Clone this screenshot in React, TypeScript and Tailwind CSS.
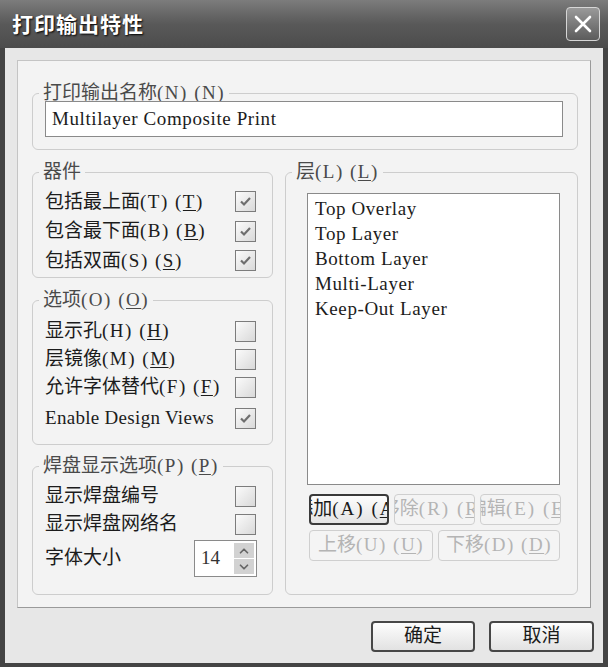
import { ChevronDown, ChevronUp } from 'lucide-react';

const font = "font-['Liberation_Serif','Noto_Sans_CJK_SC',serif]";

// label with mnemonic: 文本(K) (K) — second one underlined
const Mn = ({ t, k, wide }: { t: string; k: string; wide?: boolean }) => (
  <>
    {t}
    <span className={wide ? 'tracking-[2px]' : 'tracking-[1.5px]'}>
      ({k}) (<span className="underline underline-offset-2">{k}</span>)
    </span>
  </>
);

const Check = ({ on }: { on?: boolean }) => (
  <div className="w-[21px] h-[21px] border border-[#7c7c7c] bg-gradient-to-br from-[#fbfbfb] to-[#d9d9d9] flex items-center justify-center shrink-0">
    {on && (
      <svg width="15" height="15" viewBox="0 0 15 15">
        <path d="M3 7.5 L6 10.5 L12 4" fill="none" stroke="#6e6e6e" strokeWidth="2.2" />
      </svg>
    )}
  </div>
);

const Row = ({ children, on, h = 'h-[29px]' }: { children: React.ReactNode; on?: boolean; h?: string }) => (
  <div className={`flex items-center justify-between pl-[12px] pr-[16px] ${h}`}>
    <span className="text-[19px] text-[#1c1c1c] whitespace-nowrap">{children}</span>
    <Check on={on} />
  </div>
);

const Group = ({ title, className, children }: { title: React.ReactNode; className: string; children: React.ReactNode }) => (
  <fieldset className={`border border-[#cdcdcd] rounded-[6px] flex flex-col ${className}`}>
    <legend className="ml-[6px] px-[4px] text-[19px] leading-[20px] text-[#4a4a4a] whitespace-nowrap">{title}</legend>
    {children}
  </fieldset>
);

const SmallBtn = ({ children, w, active }: { children: React.ReactNode; w: string; active?: boolean }) => (
  <div
    className={`${w} h-full rounded-[4px] overflow-hidden flex items-center justify-center whitespace-nowrap text-[19px] ${
      active
        ? 'border-2 border-[#3a3a3a] bg-gradient-to-b from-[#fdfdfd] to-[#e4e4e4] text-[#1a1a1a]'
        : 'border border-[#cfcfcf] bg-[#f4f4f4] text-[#b4b4b4]'
    }`}
  >
    {children}
  </div>
);

const App = () => {
  return (
    <div className={`w-[608px] h-[667px] bg-[#444] flex flex-col ${font}`}>
      {/* Title bar */}
      <div className="h-[48px] shrink-0 bg-gradient-to-b from-[#7c7c7c] via-[#595959] to-[#4c4c4c] flex items-center justify-between pl-[12px] pr-[8px]">
        <span className="text-white font-bold text-[21px] tracking-[1px] font-['Noto_Sans_CJK_SC',sans-serif] [text-shadow:1px_1px_2px_#000]">
          打印输出特性
        </span>
        <div className="w-[34px] h-[34px] rounded-[4px] border border-[#d6d6d6] bg-gradient-to-b from-[#9a9a9a] to-[#5c5c5c] flex items-center justify-center">
          <svg width="20" height="20" viewBox="0 0 20 20">
            <path d="M3 3 L17 17 M17 3 L3 17" stroke="#fff" strokeWidth="2.6" strokeLinecap="round" />
          </svg>
        </div>
      </div>

      {/* Client area */}
      <div className="flex-1 mx-[5px] mb-[4px] bg-[#e7e7e7] flex flex-col">
        <div className="mt-[12px] mx-[12px] h-[548px] border border-t-[#c4c4c4] border-l-[#c4c4c4] border-r-[#9a9a9a] border-b-[#9a9a9a] bg-[#f3f3f3] pt-[22px] pl-[14px] pr-[12px] flex flex-col">
          {/* Output name */}
          <Group title={<Mn t="打印输出名称" k="N" />} className="h-[67px]">
            <div className="-mt-[2px] ml-[12px] mr-[14px] h-[36px] bg-white border border-[#8a8a8a] flex items-center px-[6px] text-[19px] tracking-[0.6px] text-[#1c1c1c]">
              Multilayer Composite Print
            </div>
          </Group>

          <div className="mt-[12px] flex gap-[12px]">
            {/* Left column */}
            <div className="w-[241px] flex flex-col">
              <Group title="器件" className="h-[116px]">
                <div className="mt-[5px]">
                  <Row on h="h-[29.5px]"><Mn t="包括最上面" k="T" /></Row>
                  <Row on h="h-[29.5px]"><Mn t="包含最下面" k="B" /></Row>
                  <Row on h="h-[29.5px]"><Mn t="包括双面" k="S" /></Row>
                </div>
              </Group>

              <Group title={<Mn t="选项" k="O" />} className="h-[155px] mt-[12px]">
                <div className="mt-[7px]">
                  <Row h="h-[28px]"><Mn t="显示孔" k="H" /></Row>
                  <Row h="h-[28px]"><Mn t="层镜像" k="M" /></Row>
                  <Row h="h-[28px]"><Mn t="允许字体替代" k="F" /></Row>
                  <div className="mt-[3px]">
                    <Row on h="h-[28px]"><span className="tracking-[0.3px]">Enable Design Views</span></Row>
                  </div>
                </div>
              </Group>

              <Group title={<Mn t="焊盘显示选项" k="P" />} className="h-[139px] mt-[11px]">
                <div className="mt-[6px]">
                  <Row h="h-[28px]">显示焊盘编号</Row>
                  <Row h="h-[28px]">显示焊盘网络名</Row>
                  <div className="mt-[2px] h-[37px] flex items-center justify-between pl-[12px] pr-[15px]">
                    <span className="text-[19px] text-[#1c1c1c]">字体大小</span>
                    <div className="w-[63px] h-[37px] bg-white border border-[#8a8a8a] flex items-center justify-between pl-[6px] pr-[2px]">
                      <span className="text-[19px] text-[#333]">14</span>
                      <div className="flex flex-col gap-[1px]">
                        <div className="w-[20px] h-[15px] bg-[#d2d2d2] flex items-center justify-center">
                          <ChevronUp size={14} strokeWidth={3} color="#666" />
                        </div>
                        <div className="w-[20px] h-[15px] bg-[#d2d2d2] flex items-center justify-center">
                          <ChevronDown size={14} strokeWidth={3} color="#666" />
                        </div>
                      </div>
                    </div>
                  </div>
                </div>
              </Group>
            </div>

            {/* Right column: layers */}
            <Group title={<Mn t="层" k="L" />} className="w-[293px] h-[433px]">
              <div className="mt-[11px] ml-[21px] mr-[17px] h-[292px] bg-white border border-[#8a8a8a] pt-[2px] pl-[7px] text-[19px] tracking-[0.6px] leading-[25px] text-[#1c1c1c]">
                <div>Top Overlay</div>
                <div>Top Layer</div>
                <div>Bottom Layer</div>
                <div>Multi-Layer</div>
                <div>Keep-Out Layer</div>
              </div>
              <div className="mt-[9px] ml-[23px] h-[31px] flex gap-[5px]">
                <SmallBtn w="w-[80px]" active><Mn t="添加" k="A" wide /></SmallBtn>
                <SmallBtn w="w-[81px]"><Mn t="移除" k="R" wide /></SmallBtn>
                <SmallBtn w="w-[81px]"><Mn t="编辑" k="E" wide /></SmallBtn>
              </div>
              <div className="mt-[5px] ml-[23px] h-[31px] flex gap-[5px]">
                <SmallBtn w="w-[124px]"><Mn t="上移" k="U" /></SmallBtn>
                <SmallBtn w="w-[122px]"><Mn t="下移" k="D" /></SmallBtn>
              </div>
            </Group>
          </div>
        </div>

        {/* Bottom buttons */}
        <div className="mt-[13px] flex justify-end gap-[14px] pr-[9px]">
          <div className="w-[104px] h-[31px] rounded-[4px] border-2 border-[#474747] bg-gradient-to-b from-[#fdfdfd] to-[#e2e2e2] flex items-center justify-center text-[19px] text-[#1a1a1a]">
            确定
          </div>
          <div className="w-[105px] h-[31px] rounded-[4px] border-2 border-[#474747] bg-gradient-to-b from-[#fdfdfd] to-[#e2e2e2] flex items-center justify-center text-[19px] text-[#1a1a1a]">
            取消
          </div>
        </div>
      </div>
    </div>
  );
};

export default App;
